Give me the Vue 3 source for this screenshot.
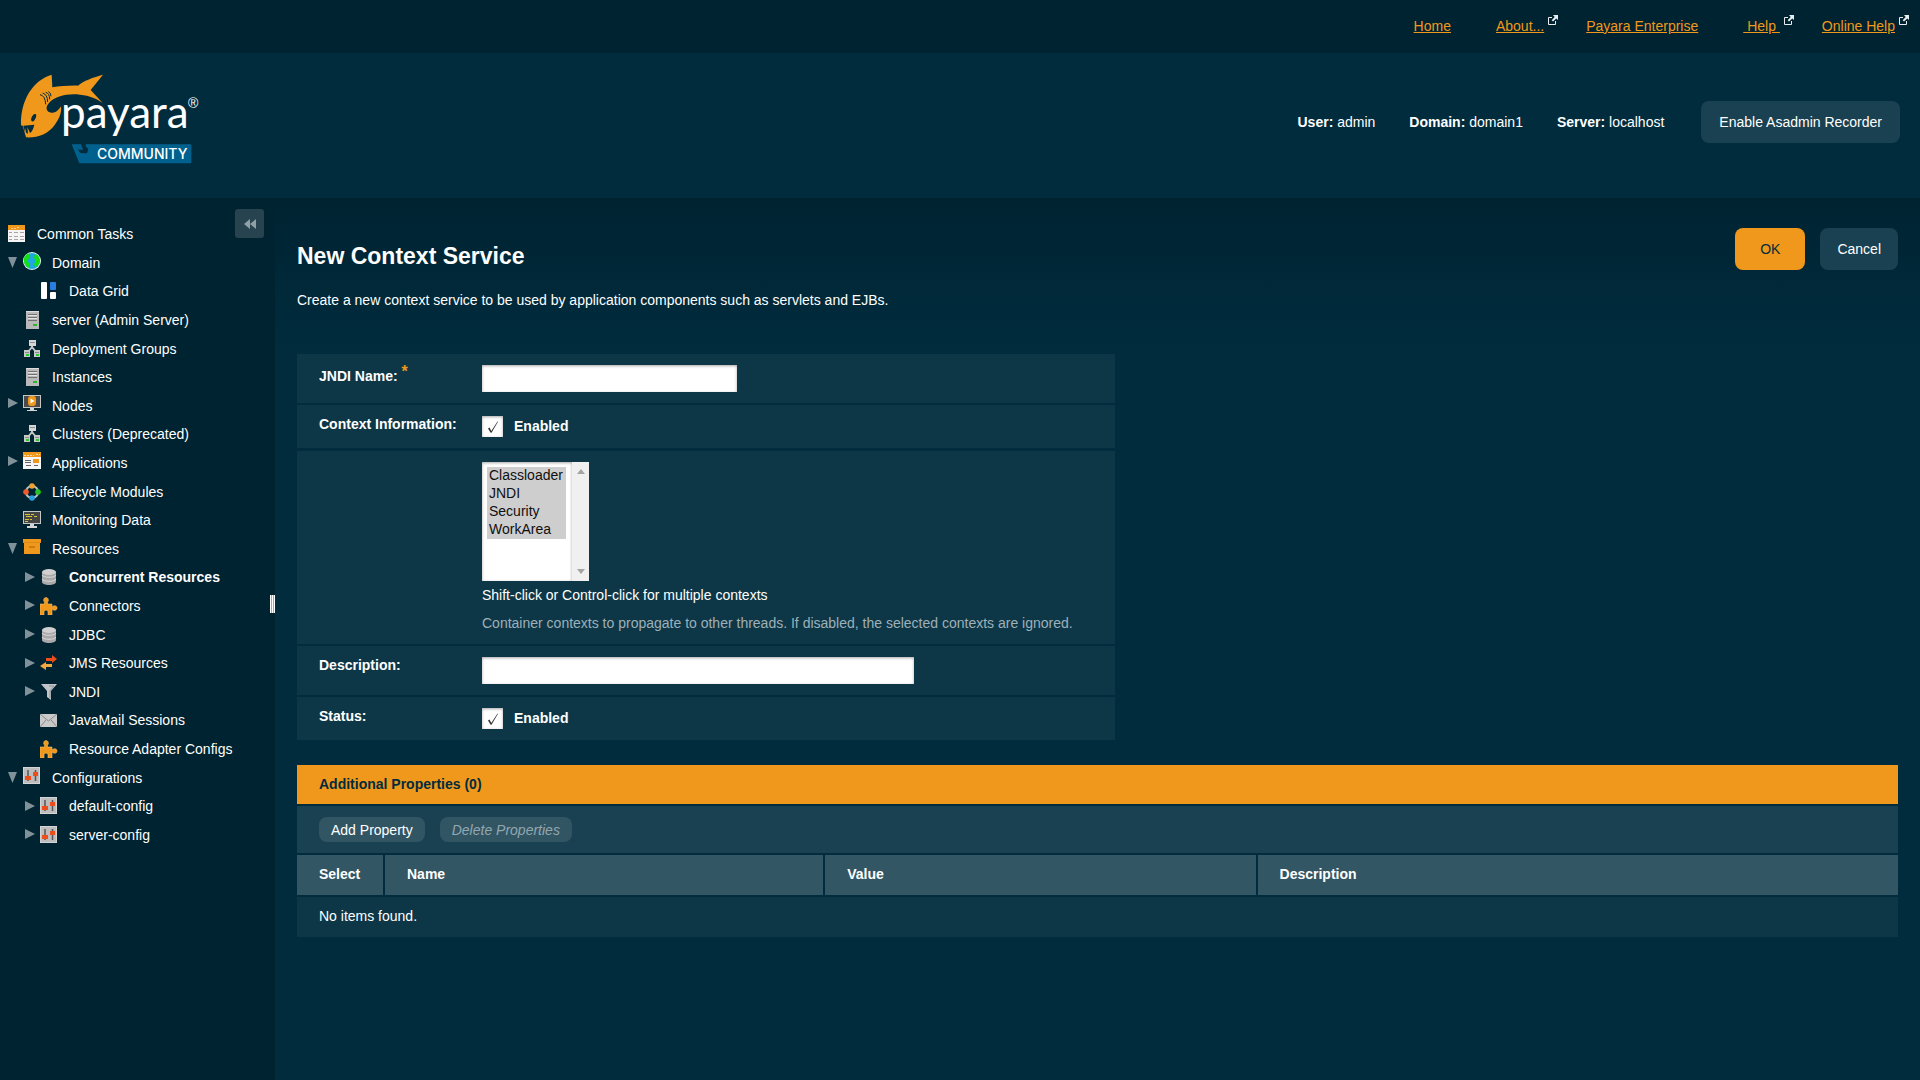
<script setup>
import { ref } from 'vue'

const server =
  '<rect x="3" y="0" width="13" height="18" fill="#b9b9b9"/><rect x="3" y="0" width="13" height="1" fill="#dcdcdc"/><path d="M5 3.500h9M5 6.500h9M5 9.500h9" stroke="#707070"/><path d="M5 4.500h9M5 7.500h9" stroke="#e4e4e4"/><rect x="10" y="13" width="4" height="2" fill="#2fb52f"/>'
const cluster =
  '<path d="M9 6v3M9 7l-4 5M9 7l4 5" stroke="#c4c4c4" stroke-width="2" fill="none"/><rect x="6" y="0" width="7" height="6" fill="#d6d6d6"/><path d="M7 2.500h5" stroke="#8d8d8d"/><rect x="1" y="10" width="6" height="7" fill="#c9c9c9"/><rect x="11" y="10" width="6" height="7" fill="#c9c9c9"/><path d="M2 12.500h4M12 12.500h4" stroke="#8a8a8a"/><rect x="3" y="14" width="3" height="2" fill="#2fc52f"/><rect x="13" y="14" width="3" height="2" fill="#2fc52f"/>'
const database =
  '<path d="M2 4v10c0 4 14 4 14 0V4z" fill="#a9a9a9"/><path d="M2 7c1 3 13 3 14 0M2 11c1 3 13 3 14 0" stroke="#dadada" fill="none"/><ellipse cx="9" cy="4" rx="7" ry="3" fill="#d0d0d0"/>'
const puzzle =
  '<path d="M0 7h4.500V5C3 4 3.500 0.500 6 0.500S9 4 7.500 5v2H12v3c2-2 5-1.500 5 1s-3 3-5 1v6H8v-3c0-2.500-4-2.500-4 0v3H0z" fill="#f0981b" stroke="#f7bd6b" stroke-width=".6"/>'
const sliders =
  '<rect x="0" y="0" width="17" height="17" fill="#d4d4d4"/><rect x="1" y="1" width="15" height="15" fill="#bdbdbd"/><path d="M5 3v11M12.500 3v11" stroke="#555" stroke-width="1.500"/><rect x="2" y="9" width="6" height="4" fill="#ee4e1b"/><rect x="10" y="5" width="5" height="4" fill="#ee4e1b"/>'

const icons = {
  tasks:
    '<rect x="0" y="0" width="17" height="17" fill="#f5f5f5"/><rect x="0" y="0" width="17" height="5" fill="#f0981b"/><path d="M3 3.500h2M6 3.500h2M9 2.500h2" stroke="#ffd08a"/><path d="M1 7.500h3M6 7.500h4M12 7.500h4M1 11.500h3M6 11.500h4M12 11.500h4M1 14.500h3M6 14.500h4M12 14.500h4" stroke="#a5a5a5"/>',
  globe:
    '<circle cx="9" cy="9" r="9" fill="#e9fbe9"/><circle cx="9" cy="9" r="8" fill="#1ea7e0"/><path d="M1 6C3 2 5 1 6 2l1 3-3 4 3 3-1 4C2 14 0 10 1 6zM12 2c4 1 6 6 4 10-1 2-3 3-4 3l-1-3 2-3-2-3z" fill="#13e013"/>',
  grid:
    '<rect x="1" y="0" width="6" height="17" rx="1" fill="#fff"/><rect x="10" y="0" width="6" height="8" rx="1" fill="#2b7de1"/><rect x="10" y="10" width="6" height="7" rx="1" fill="#fff"/>',
  server,
  cluster,
  database,
  puzzle,
  sliders,
  nodes:
    '<rect x="0" y="0" width="18" height="13" fill="#c6c6c6"/><rect x="1" y="1" width="16" height="11" fill="#4a4a4a"/><path d="M7 13h4v2h3v1H4v-1h3z" fill="#d5d5d5"/><rect x="5" y="1" width="8" height="10" rx="3" fill="#f0981b"/><path d="M7.500 3.500v5l4-2.500z" fill="#fff"/>',
  apps:
    '<rect x="0" y="0" width="18" height="17" fill="#f6f6f6"/><rect x="0" y="0" width="18" height="5" fill="#f0981b"/><path d="M1 3.500h10M13 2.500h4" stroke="#ffe0b0" stroke-dasharray="2 1"/><path d="M2 8.500h6M2 10.500h6M3 13.500h5M11 13.500h4" stroke="#666"/><rect x="10" y="7" width="6" height="4" fill="#f0981b"/>',
  cycle:
    '<circle cx="9" cy="9" r="6" fill="none" stroke="#b9c0c2" stroke-width="2"/><circle cx="9" cy="3" r="2.800" fill="#f0a030"/><circle cx="15" cy="9" r="2.800" fill="#22c522"/><circle cx="9" cy="15" r="2.800" fill="#27a3e0"/><circle cx="3" cy="9" r="2.800" fill="#ee5a2a"/>',
  monitor:
    '<rect x="0" y="0" width="18" height="13" fill="#c6c6c6"/><rect x="1" y="1" width="16" height="11" fill="#444"/><path d="M7 13h4v2h3v2H4v-2h3z" fill="#d5d5d5"/><path d="M2 3.500h5M8 3.500h3M3 5.500h6M11 5.500h3M2 8.500h4M7 8.500h2M2 10.500h3" stroke="#d6c435"/>',
  box:
    '<path d="M0 1h18v4h-1v11H1V5H0z" fill="#f0981b"/><path d="M0 4.500h18" stroke="#d98a18"/><rect x="6" y="8" width="6" height="2" fill="#c97c12"/>',
  jms:
    '<path d="M6 4h6V1l5 4-5 4V7H6z" fill="#ee4e1b"/><path d="M12 10H6V8l-6 4 6 4v-3h6z" fill="#f0a840"/>',
  funnel: '<path d="M1 1h16l-6 7v9l-4-3V8z" fill="#c2c5c7"/><path d="M9 3h5l-4 5v7" fill="none" stroke="#8f9496"/>',
  mail:
    '<rect x="0" y="3" width="17" height="13" fill="#c9c9c9"/><path d="M0 3l8.500 7L17 3M0 16l6-7M17 16l-6-7" stroke="#8a8a8a" fill="none"/>',
}

const tree = ref([
  { label: 'Common Tasks', icon: 'tasks', level: 0 },
  { label: 'Domain', icon: 'globe', level: 1, state: 'open' },
  { label: 'Data Grid', icon: 'grid', level: 2 },
  { label: 'server (Admin Server)', icon: 'server', level: 1 },
  { label: 'Deployment Groups', icon: 'cluster', level: 1 },
  { label: 'Instances', icon: 'server', level: 1 },
  { label: 'Nodes', icon: 'nodes', level: 1, state: 'closed' },
  { label: 'Clusters (Deprecated)', icon: 'cluster', level: 1 },
  { label: 'Applications', icon: 'apps', level: 1, state: 'closed' },
  { label: 'Lifecycle Modules', icon: 'cycle', level: 1 },
  { label: 'Monitoring Data', icon: 'monitor', level: 1 },
  { label: 'Resources', icon: 'box', level: 1, state: 'open' },
  { label: 'Concurrent Resources', icon: 'database', level: 2, state: 'closed', current: true },
  { label: 'Connectors', icon: 'puzzle', level: 2, state: 'closed' },
  { label: 'JDBC', icon: 'database', level: 2, state: 'closed' },
  { label: 'JMS Resources', icon: 'jms', level: 2, state: 'closed' },
  { label: 'JNDI', icon: 'funnel', level: 2, state: 'closed' },
  { label: 'JavaMail Sessions', icon: 'mail', level: 2 },
  { label: 'Resource Adapter Configs', icon: 'puzzle', level: 2 },
  { label: 'Configurations', icon: 'sliders', level: 1, state: 'open' },
  { label: 'default-config', icon: 'sliders', level: 2, state: 'closed' },
  { label: 'server-config', icon: 'sliders', level: 2, state: 'closed' },
])

const links = [
  { label: 'Home' },
  { label: 'About...', external: true },
  { label: 'Payara Enterprise' },
  { label: '\u00a0Help\u00a0', external: true },
  { label: 'Online Help', external: true },
]

const jndiName = ref('')
const description = ref('')
const contextEnabled = ref(true)
const statusEnabled = ref(true)
const contexts = ['Classloader', 'JNDI', 'Security', 'WorkArea']
const selected = ref([...contexts])
</script>

<template>
  <div class="page">
    <nav class="topbar">
      <a v-for="l in links" :key="l.label" href="#" :class="{ plain: !l.external }">{{ l.label }}<svg
        v-if="l.external" class="ext" width="10" height="10" viewBox="0 0 10 10" aria-hidden="true">
        <path d="M4 2.500H.500V9.500H7.500V6" fill="none" stroke="#e8eef0" />
        <path d="M5 0h5v5L8.300 3.500 5 6.500 3.700 5.200 6.700 2z" fill="#e8eef0" />
      </svg></a>
    </nav>

    <header class="masthead">
      <svg class="logo" width="180" height="92" viewBox="0 0 180 92" role="img" aria-label="Payara Community">
        <svg width="180" height="92" viewBox="60 70 540 276">
          <path
            d="M155 75C98 92 61 152 63 227L68 228L78 263C112 265 144 254 164 226C178 206 185 192 183 170C174 183 166 191 154 189C140 187 135 174 145 162C166 138 203 131 240 135C270 138 290 147 308 160L272 121L309 75C280 83 250 93 234 108C210 107 178 110 157 113Z"
            fill="#f0981b" />
          <path d="M70 228L103 225Q98 246 90 250L82 232L84 252L78 249L75 234L73 246Z" fill="#002c3e" />
          <ellipse cx="101" cy="204" rx="6" ry="12" transform="rotate(25 101 204)" fill="#002c3e" />
          <path d="M120 135Q136 138 137 164M128 130Q143 135 143 157M137 128Q149 131 149 149M145 126Q153 129 153 140" fill="none"
            stroke="#002c3e" stroke-width="3" />
          <path d="M215 284H243L249 300H238L234 296Q236 311 247 311H261L265 298L257 290V284H571Q574 284 574 287V338Q574 341 571 341H238Z"
            fill="#00618e" />
        </svg>
        <text x="41" y="55" class="wordmark">payara</text>
        <text x="168" y="35" class="reg">®</text>
        <text x="77" y="86" class="edition">COMMUNITY</text>
      </svg>
      <div class="session">
        <span><b>User:</b> admin</span>
        <span><b>Domain:</b> domain1</span>
        <span><b>Server:</b> localhost</span>
        <button type="button" class="btn recorder">Enable Asadmin Recorder</button>
      </div>
    </header>

    <div class="body">
      <aside class="sidebar">
        <button type="button" class="collapse" aria-label="Collapse navigation">
          <svg width="12" height="10" viewBox="0 0 12 10"><path d="M6 0v10L0 5zM12 0v10L6 5z" fill="#90a0a6" /></svg>
        </button>
        <ul class="tree">
          <li v-for="n in tree" :key="n.label" :class="['level-' + n.level, n.state, { current: n.current }]">
            <span v-if="n.level" class="twisty">
              <button v-if="n.state" type="button" :aria-label="'Toggle ' + n.label">
                <svg v-if="n.state === 'open'" width="10" height="11" viewBox="0 0 10 11"><path d="M0 0h9L4.500 11z" fill="#80919a" /></svg>
                <svg v-else width="10" height="11" viewBox="0 0 10 11"><path d="M0 0v10L10 5z" fill="#80919a" /></svg>
              </button>
            </span>
            <svg class="icon" width="18" height="18" viewBox="0 0 18 18" aria-hidden="true" v-html="icons[n.icon]"></svg>
            <a href="#">{{ n.label }}</a>
          </li>
        </ul>
        <div class="grip"></div>
      </aside>

      <main class="content">
        <div class="titlebar">
          <h1>New Context Service</h1>
          <div class="actions">
            <button type="submit" form="service" class="btn primary">OK</button>
            <button type="button" class="btn">Cancel</button>
          </div>
        </div>
        <p class="intro">Create a new context service to be used by application components such as servlets and EJBs.</p>

        <form id="service" class="sheet" @submit.prevent>
          <div class="row">
            <label class="name" for="jndi">JNDI Name: <span class="star">*</span></label>
            <div class="control"><input id="jndi" v-model="jndiName" type="text" class="text short" /></div>
          </div>
          <div class="row">
            <span class="name">Context Information:</span>
            <div class="control">
              <label class="check"><input v-model="contextEnabled" type="checkbox" />Enabled</label>
            </div>
          </div>
          <div class="row spaced">
            <span class="name"></span>
            <div class="control">
              <div class="listbox">
                <select v-model="selected" multiple size="6" aria-label="Contexts">
                  <option v-for="c in contexts" :key="c">{{ c }}</option>
                </select>
                <span class="track" aria-hidden="true">
                  <svg width="8" height="5" viewBox="0 0 8 5"><path d="M0 5L4 0l4 5z" fill="#a3a3a3" /></svg>
                  <svg width="8" height="5" viewBox="0 0 8 5"><path d="M0 0h8L4 5z" fill="#a3a3a3" /></svg>
                </span>
              </div>
              <p class="hint">Shift-click or Control-click for multiple contexts</p>
              <p class="help">Container contexts to propagate to other threads. If disabled, the selected contexts are ignored.</p>
            </div>
          </div>
          <div class="row">
            <label class="name" for="desc">Description:</label>
            <div class="control"><input id="desc" v-model="description" type="text" class="text long" /></div>
          </div>
          <div class="row">
            <span class="name">Status:</span>
            <div class="control">
              <label class="check"><input v-model="statusEnabled" type="checkbox" />Enabled</label>
            </div>
          </div>
        </form>

        <section class="properties">
          <h2>Additional Properties (0)</h2>
          <div class="toolbar">
            <button type="button" class="mini">Add Property</button>
            <button type="button" class="mini" disabled>Delete Properties</button>
          </div>
          <table>
            <thead>
              <tr>
                <th class="select" scope="col">Select</th>
                <th class="prop" scope="col">Name</th>
                <th class="value" scope="col">Value</th>
                <th scope="col">Description</th>
              </tr>
            </thead>
            <tbody>
              <tr><td colspan="4">No items found.</td></tr>
            </tbody>
          </table>
        </section>
      </main>
    </div>
  </div>
</template>

<style>
body {
  background: #002c3e;
}
</style>

<style scoped>
.page {
  display: flex;
  flex-direction: column;
  min-height: 100vh;
  color: #fff;
  font: 14px/18px "Liberation Sans", Arial, sans-serif;
}
.page *,
.page *::before {
  box-sizing: border-box;
}
button,
input,
select {
  margin: 0;
  border: 0;
  font: inherit;
  color: inherit;
}
button {
  cursor: pointer;
}
p,
h1,
h2 {
  margin: 0;
}

.topbar {
  display: flex;
  align-items: center;
  justify-content: flex-end;
  gap: 28px;
  height: 53px;
  padding: 0 11px 2px 0;
  background: #002331;
}
.topbar a {
  color: #f0981b;
}
.topbar .plain {
  padding-right: 17px;
}
.ext {
  margin: -4px 0 0 4px;
  vertical-align: 6px;
}

.masthead {
  display: flex;
  align-items: flex-start;
  justify-content: space-between;
  height: 145px;
  padding: 20px 20px 0;
  background: #002c3e;
}
.wordmark {
  fill: #fff;
  font: 44px Lato, sans-serif;
}
.reg {
  fill: #fff;
  font: 14px "Liberation Sans", Arial, sans-serif;
}
.edition {
  fill: #fff;
  font: 500 14px Inter, sans-serif;
}
.session {
  display: flex;
  align-items: center;
  gap: 34px;
  margin-top: 28px;
}
.btn {
  height: 42px;
  padding: 0 17px;
  border-radius: 8px;
  background: #1a4151;
}
.recorder {
  margin-left: 3px;
  padding: 0 18px;
}
.primary {
  padding: 0 25px;
  background: #f0981b;
  color: #002c3e;
}

.body {
  display: flex;
  flex: 1;
}
.sidebar {
  position: relative;
  flex: 0 0 275px;
  padding-top: 22px;
  background: #002331;
}
.collapse {
  position: absolute;
  top: 11px;
  right: 11px;
  display: flex;
  align-items: center;
  justify-content: center;
  width: 29px;
  height: 29px;
  padding: 0;
  border-radius: 3px;
  background: #26434f;
}
.grip {
  position: absolute;
  top: 45%;
  right: 0;
  width: 5px;
  height: 18px;
  background: repeating-linear-gradient(90deg, #fff 0 1px, #a8a8a8 1px 2px);
}
.tree {
  display: grid;
  grid-auto-rows: 1fr;
  min-height: 629px;
  margin: 0;
  padding: 0;
  list-style: none;
}
.tree li {
  display: flex;
  align-items: center;
  padding-left: 8px;
}
.tree .level-2 {
  padding-left: 25px;
}
.tree a {
  margin-left: 11px;
  color: #fff;
  text-decoration: none;
  white-space: nowrap;
}
.tree .current a {
  font-weight: bold;
}
.twisty {
  display: flex;
  width: 15px;
}
.twisty button {
  display: flex;
  padding: 0;
  background: none;
}
.level-1.open .icon,
.level-1.closed .icon,
.level-1.closed .twisty {
  margin-bottom: 4px;
}

.content {
  flex: 1;
  min-width: 0;
  padding: 30px 22px;
  background: linear-gradient(#002331, #002c3e 150px);
}
.titlebar {
  display: flex;
  justify-content: space-between;
}
h1 {
  margin-top: 14px;
  font-size: 23px;
  line-height: 28px;
}
.actions {
  display: flex;
  gap: 15px;
}
.intro {
  margin-top: 21px;
}

.sheet {
  display: flex;
  flex-direction: column;
  gap: 2px;
  max-width: 818px;
  margin-top: 45px;
}
.row {
  display: flex;
  padding: 0 22px;
  background: #0d3747;
}
.spaced {
  margin-top: 1px;
}
.name {
  flex: 0 0 163px;
  padding-top: 10px;
  font-weight: bold;
}
.star {
  color: #f0981b;
  font-size: 16px;
  line-height: 1;
  vertical-align: 4px;
}
.control {
  padding: 11px 0;
}
.text {
  display: block;
  height: 27px;
  padding: 0 6px;
  background: #fff;
  box-shadow: inset 0 1px 3px rgba(0, 0, 0, 0.35);
  color: #1a1a1a;
}
.short {
  width: 255px;
}
.long {
  width: 432px;
}
.check {
  display: flex;
  align-items: flex-start;
  gap: 11px;
  font-weight: bold;
  line-height: 20px;
}
.check input {
  width: 21px;
  height: 21px;
  appearance: none;
  background: #fff;
  box-shadow: inset 0 1px 3px rgba(0, 0, 0, 0.35);
}
.check input:checked {
  background: #fff url("data:image/svg+xml,%3Csvg xmlns='http://www.w3.org/2000/svg' width='21' height='21'%3E%3Cpath d='M6 12.500l1.500-1 1.800 3.500L15.500 5.500l.500.300-6.500 11h-.800z' fill='%23333'/%3E%3C/svg%3E");
}
.listbox {
  display: flex;
  width: 107px;
  height: 119px;
}
select {
  flex: 1;
  min-width: 0;
  height: 119px;
  padding: 5px 6px 5px 5px;
  overflow: hidden;
  border-radius: 0;
  outline: 0;
  background: #fff;
  box-shadow: inset 0 1px 3px rgba(0, 0, 0, 0.35);
  color: #1a1a1a;
}
option {
  min-height: 18px;
  padding: 0 2px;
  line-height: 18px;
}
.track {
  display: flex;
  flex-direction: column;
  align-items: center;
  justify-content: space-between;
  width: 17px;
  padding: 7px 0;
  background: #f0f0f0;
}
.hint {
  margin-top: 5px;
}
.help {
  margin: 10px 0 1px;
  color: #9eb0b8;
}

.properties {
  margin-top: 25px;
}
h2 {
  height: 39px;
  padding: 0 22px;
  background: #f0981b;
  color: #002c3e;
  font-size: 14px;
  line-height: 39px;
}
.toolbar {
  display: flex;
  gap: 15px;
  margin: 2px 0;
  padding: 11px 22px;
  background: #1a4151;
}
.mini {
  height: 25px;
  padding: 0 12px;
  border-radius: 8px;
  background: #325564;
}
.mini:disabled {
  color: #94a7af;
  font-style: italic;
}
table {
  width: 100%;
  table-layout: fixed;
  border-collapse: separate;
  border-spacing: 0;
}
th {
  height: 40px;
  padding: 0 22px 2px;
  background: #335665;
  text-align: left;
}
th + th {
  border-left: 2px solid #002c3e;
}
.select {
  width: 86px;
}
.prop {
  width: 27.5%;
}
.value {
  width: 27%;
}
td {
  height: 42px;
  padding: 0 22px 2px;
  border-top: 2px solid #002c3e;
  background: #0d3747;
}
</style>
